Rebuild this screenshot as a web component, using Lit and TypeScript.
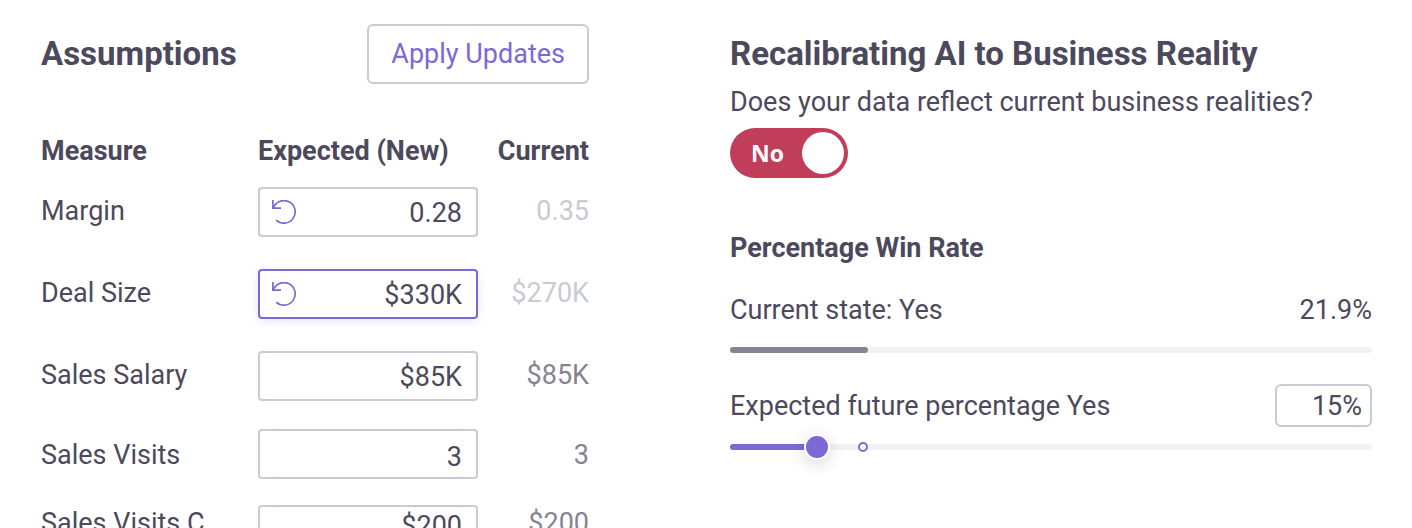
import { LitElement, html, css, svg, nothing } from "lit";
import { customElement, property, state } from "lit/decorators.js";
import { classMap } from "lit/directives/class-map.js";
import { styleMap } from "lit/directives/style-map.js";

interface Measure {
  id: string;
  name: string;
  expected: string;
  current: string;
  changed?: boolean;
  active?: boolean;
  density?: "tight" | "low" | "compact";
}

const MEASURES: Measure[] = [
  { id: "margin", name: "Margin", expected: "0.28", current: "0.35", changed: true },
  { id: "deal-size", name: "Deal Size", expected: "$330K", current: "$270K", changed: true, active: true },
  { id: "sales-salary", name: "Sales Salary", expected: "$85K", current: "$85K", density: "tight" },
  { id: "sales-visits", name: "Sales Visits", expected: "3", current: "3", density: "low" },
  { id: "sales-visits-c", name: "Sales Visits C", expected: "$200", current: "$200", density: "compact" },
];

const resetIcon = svg`
  <path d="M0.9 0V8.2H9" />
  <path d="M1.2 8.2A11.3 11.3 0 1 1 4.2 20.2" />
`;

const shared = css`
  * {
    box-sizing: border-box;
  }
  h2,
  h3,
  p {
    margin: 0;
  }
  h2 {
    font-size: 33px;
    line-height: 40px;
    font-weight: 700;
  }
  input,
  button {
    font: inherit;
    color: inherit;
    margin: 0;
    padding: 0;
    border: 0;
    outline: none;
    background: none;
  }
  button {
    cursor: pointer;
  }
`;

@customElement("assumptions-panel")
export class AssumptionsPanel extends LitElement {
  @property({ attribute: false }) measures: Measure[] = [];

  static styles = [
    shared,
    css`
      :host {
        display: block;
      }
      .head {
        display: flex;
        align-items: center;
        justify-content: space-between;
      }
      .apply {
        height: 60px;
        padding: 0 22px;
        border: 2px solid #c8cad6;
        border-radius: 6px;
        color: #7e68d6;
      }
      table {
        width: 100%;
        margin-top: 51px;
        border-collapse: collapse;
        table-layout: fixed;
      }
      .col-expected {
        width: 220px;
      }
      .col-current {
        width: 111px;
      }
      th,
      td {
        padding: 0;
        text-align: left;
        vertical-align: top;
        white-space: nowrap;
      }
      thead th {
        padding-bottom: 20px;
        font-weight: 700;
        line-height: 32px;
      }
      tbody th {
        font-weight: 400;
      }
      tbody th,
      tbody .current {
        line-height: 48px;
      }
      tbody th,
      tbody td {
        padding-bottom: 32px;
      }
      .tight th,
      .tight td {
        padding-bottom: 28px;
      }
      .low th,
      .low td {
        padding-bottom: 24px;
      }
      .low th,
      .low .current {
        line-height: 52px;
      }
      .compact th,
      .compact .current {
        line-height: 36px;
      }
      .current {
        text-align: right;
      }
      tbody .current {
        color: #878492;
      }
      .changed .current {
        color: #c8cad4;
      }
      .field {
        display: flex;
        align-items: center;
        height: 50px;
        padding: 0 14px 0 12px;
        border: 2px solid #c8cad6;
        border-radius: 4px;
      }
      .active .field {
        border-color: #7e68d6;
        box-shadow: 0 2px 8px rgba(126, 104, 214, 0.18);
      }
      .compact .field {
        height: 40px;
      }
      .field input {
        flex: 1;
        min-width: 0;
        height: 100%;
        padding-top: 2px;
        text-align: right;
      }
      .low .field input {
        padding-top: 6px;
      }
      .reset {
        display: flex;
      }
      .reset svg {
        width: 25px;
        height: 25px;
        fill: none;
        stroke: #7e68d6;
        stroke-width: 1.7;
      }
    `,
  ];

  render() {
    return html`
      <div class="head">
        <h2>Assumptions</h2>
        <button class="apply" type="button">Apply Updates</button>
      </div>
      <table>
        <colgroup>
          <col />
          <col class="col-expected" />
          <col class="col-current" />
        </colgroup>
        <thead>
          <tr>
            <th scope="col">Measure</th>
            <th scope="col">Expected (New)</th>
            <th scope="col" class="current">Current</th>
          </tr>
        </thead>
        <tbody>
          ${this.measures.map(
            (m) => html`
              <tr
                class=${classMap({
                  changed: !!m.changed,
                  active: !!m.active,
                  tight: m.density === "tight",
                  low: m.density === "low",
                  compact: m.density === "compact",
                })}
              >
                <th scope="row"><label for=${m.id}>${m.name}</label></th>
                <td>
                  <div class="field">
                    ${m.changed
                      ? html`<button class="reset" type="button" aria-label="Reset ${m.name}">
                          <svg viewBox="0 0 25 25" aria-hidden="true">${resetIcon}</svg>
                        </button>`
                      : nothing}
                    <input id=${m.id} type="text" .value=${m.expected} />
                  </div>
                </td>
                <td class="current">${m.current}</td>
              </tr>
            `
          )}
        </tbody>
      </table>
    `;
  }
}

@customElement("recalibration-panel")
export class RecalibrationPanel extends LitElement {
  @state() private reflects = false;
  @state() private expected = 15;

  static styles = [
    shared,
    css`
      :host {
        display: block;
      }
      h2 {
        margin-top: 10px;
      }
      p {
        margin-top: 12px;
        line-height: 32px;
      }
      .toggle {
        display: flex;
        align-items: center;
        justify-content: space-between;
        width: 118px;
        height: 50px;
        margin-top: 10px;
        padding: 0 4px 0 21px;
        border-radius: 25px;
        background: #c03e5a;
        color: #fff;
        font-family: "Open Sans", "Noto Sans", sans-serif;
        font-size: 23px;
        font-weight: 700;
        cursor: pointer;
      }
      .knob {
        appearance: none;
        width: 42px;
        height: 42px;
        border-radius: 50%;
        background: #fff;
        cursor: pointer;
      }
      h3 {
        margin-top: 54px;
        font-size: 27px;
        line-height: 32px;
        font-weight: 700;
      }
      .row {
        display: flex;
        align-items: center;
        justify-content: space-between;
        line-height: 32px;
      }
      .state {
        margin-top: 30px;
      }
      .future {
        margin-top: 31px;
      }
      .percent {
        width: 97px;
        height: 43px;
        padding: 0 8px;
        border: 2px solid #c8cad6;
        border-radius: 6px;
        text-align: right;
      }
      .bar {
        height: 6px;
        margin-top: 21px;
        border-radius: 3px;
        background: #f1f2f6;
      }
      .fill {
        height: 100%;
        border-radius: 3px;
        background: #878492;
      }
      .slider {
        position: relative;
        display: flex;
        align-items: center;
        height: 26px;
        margin-top: 7px;
      }
      .slider .bar {
        flex: 1;
        margin: 0;
      }
      .slider .fill {
        background: #7e68d6;
      }
      .marker {
        position: absolute;
        top: 8px;
        width: 10px;
        height: 10px;
        box-sizing: border-box;
        border: 2px solid #7e68d6;
        border-radius: 50%;
        background: #fff;
      }
      .range {
        position: absolute;
        inset: 0;
        width: 100%;
        height: 26px;
        appearance: none;
        cursor: pointer;
      }
      .range::-webkit-slider-thumb {
        appearance: none;
        box-sizing: border-box;
        width: 26px;
        height: 26px;
        border: 2px solid #fff;
        border-radius: 50%;
        background: #7e68d6;
        box-shadow: 0 4px 16px rgba(60, 50, 90, 0.2);
      }
    `,
  ];

  render() {
    return html`
      <h2>Recalibrating AI to Business Reality</h2>
      <p id="question">Does your data reflect current business realities?</p>
      <label class="toggle">
        <span>${this.reflects ? "Yes" : "No"}</span>
        <input
          class="knob"
          type="checkbox"
          role="switch"
          aria-describedby="question"
          .checked=${this.reflects}
          @change=${() => (this.reflects = !this.reflects)}
        />
      </label>
      <h3>Percentage Win Rate</h3>
      <div class="row state">
        <span>Current state: Yes</span>
        <span>21.9%</span>
      </div>
      <div class="bar"><div class="fill" style=${styleMap({ width: "21.5%" })}></div></div>
      <div class="row future">
        <label for="percent">Expected future percentage Yes</label>
        <input id="percent" class="percent" type="text" .value=${`${this.expected}%`} />
      </div>
      <div class="slider">
        <div class="bar">
          <div class="fill" style=${styleMap({ width: `${this.expected * 0.9}%` })}></div>
        </div>
        <span class="marker" style=${styleMap({ left: "19.9%" })}></span>
        <input
          class="range"
          type="range"
          min="0"
          max="125"
          aria-label="Expected future percentage Yes"
          .value=${String(this.expected)}
          @input=${(e: Event) => (this.expected = Number((e.target as HTMLInputElement).value))}
        />
      </div>
    `;
  }
}

@customElement("app-root")
export class AppRoot extends LitElement {
  static styles = css`
    :host {
      display: block;
      box-sizing: border-box;
      height: 100vh;
      overflow: hidden;
      padding: 24px 40px 0 41px;
      background: #fff;
      color: #4d495c;
      font-family: Roboto, sans-serif;
      font-size: 27px;
    }
    .page {
      display: grid;
      grid-template-columns: 548fr 642fr;
      gap: 141px;
    }
  `;

  render() {
    return html`
      <main class="page">
        <assumptions-panel .measures=${MEASURES}></assumptions-panel>
        <recalibration-panel></recalibration-panel>
      </main>
    `;
  }
}
